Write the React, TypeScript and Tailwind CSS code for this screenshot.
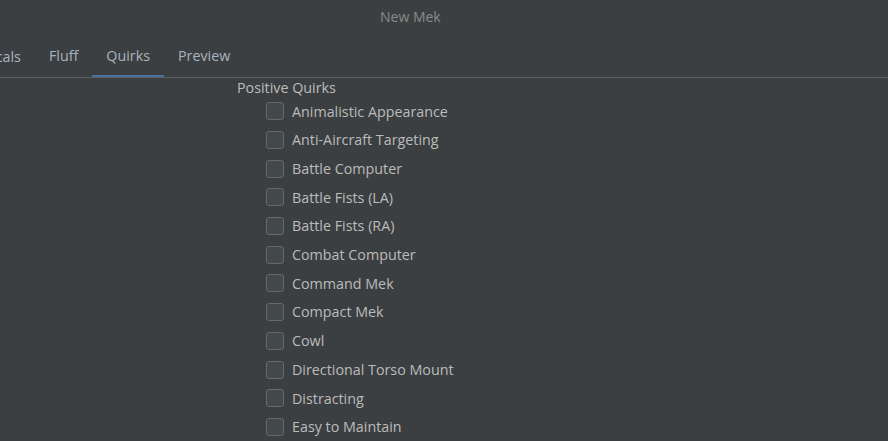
import React from "react";

const quirks = [
  "Animalistic Appearance",
  "Anti-Aircraft Targeting",
  "Battle Computer",
  "Battle Fists (LA)",
  "Battle Fists (RA)",
  "Combat Computer",
  "Command Mek",
  "Compact Mek",
  "Cowl",
  "Directional Torso Mount",
  "Distracting",
  "Easy to Maintain",
];

const tabs = ["Fluff", "Quirks", "Preview"];

export default function App() {
  return (
    <div
      className="w-[888px] h-[441px] overflow-hidden bg-[#3c3f41] text-[#bbbbbb]"
      style={{ fontFamily: '"Open Sans", "Noto Sans", sans-serif' }}
    >
      {/* Title bar */}
      <div className="h-[33px] flex items-center pl-[380px] text-[14px] text-[#8a8a8a]">
        New Mek
      </div>

      {/* Tabs */}
      <div className="h-[45px] pt-[3px] flex items-stretch border-b border-[#5e6060] overflow-hidden">
        <div className="ml-[-92px] px-[14px] flex items-center text-[14.3px] text-[#a9b3bd]">
          Assign Criticals
        </div>
        {tabs.map((t) => (
          <div
            key={t}
            className={
              "px-[14px] flex items-center text-[14.3px] text-[#a9b3bd] border-b-[3px] mb-[-1px] " +
              (t === "Quirks" ? "border-[#4a6f9f]" : "border-transparent")
            }
          >
            {t}
          </div>
        ))}
      </div>

      {/* Quirks list */}
      <div className="pl-[237px]">
        <div className="text-[14.3px] leading-[19px]">Positive Quirks</div>
        <div className="pl-[29px] flex flex-col">
          {quirks.map((q) => (
            <label key={q} className="h-[28.7px] flex items-center gap-[8px] text-[14.3px]">
              <span className="w-[18px] h-[18px] rounded-[3px] border border-[#666869] bg-[#43494a]" />
              <span>{q}</span>
            </label>
          ))}
        </div>
      </div>
    </div>
  );
}
